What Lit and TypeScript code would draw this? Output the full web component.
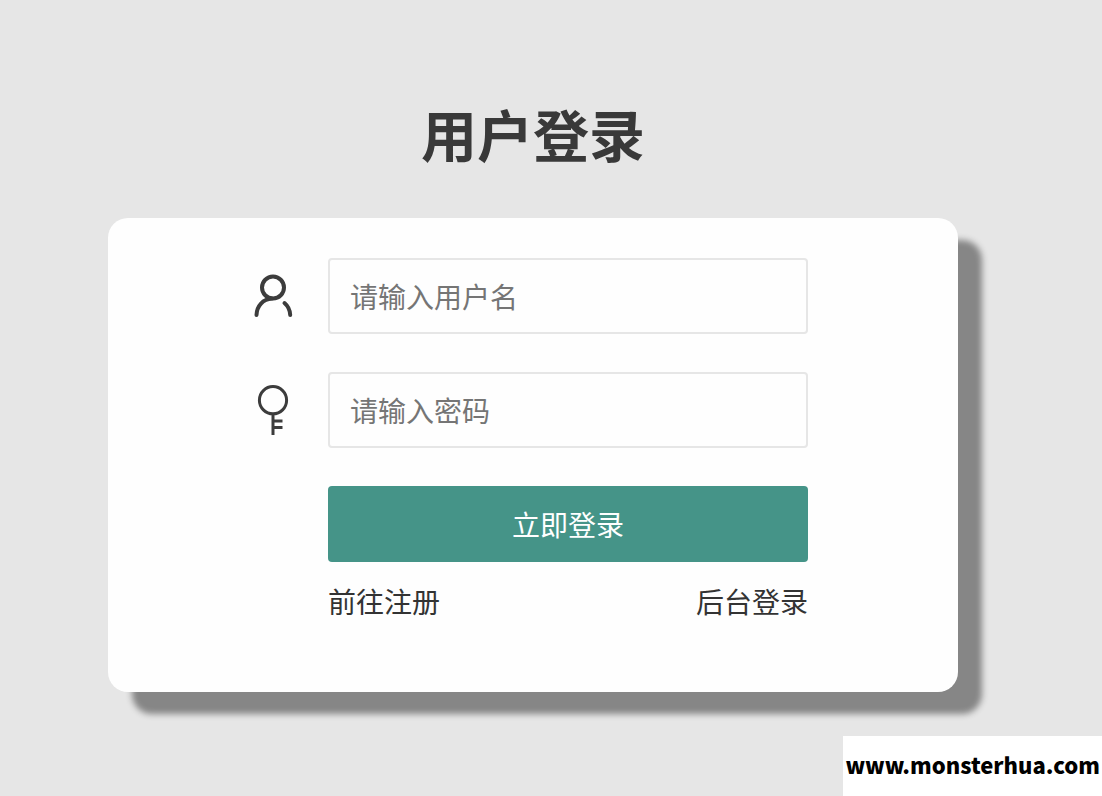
import { LitElement, html, css } from "lit";
import { customElement } from "lit/decorators.js";

@customElement("app-root")
export class AppRoot extends LitElement {
  static styles = css`
    :host {
      display: block;
      position: relative;
      box-sizing: border-box;
      min-height: 100vh;
      padding: 92px 144px 104px 108px;
      background: #e6e6e6;
      color: #333;
      font-family: "Noto Sans CJK SC", sans-serif;
      font-size: 28px;
      line-height: 40px;
    }
    .title {
      margin: 0 0 44px;
      color: #393939;
      font-size: 56px;
      line-height: 82px;
      font-weight: 700;
      text-align: center;
    }
    .card {
      box-sizing: border-box;
      max-width: 850px;
      margin: 0 auto;
      padding: 40px 150px 71px 110px;
      border-radius: 20px;
      background: #fefefe;
      box-shadow: 24px 22px 6px #868686;
    }
    .form {
      display: grid;
      grid-template-columns: 110px minmax(0, 1fr);
      row-gap: 38px;
    }
    .label {
      display: flex;
      align-items: center;
      justify-content: center;
    }
    .icon {
      width: 60px;
      height: 60px;
      fill: none;
      stroke: #3c3c3c;
    }
    .input,
    .submit {
      box-sizing: border-box;
      width: 100%;
      height: 76px;
      margin: 0;
      border-radius: 4px;
      font: inherit;
    }
    .input {
      padding: 0 20px;
      border: 2px solid #e6e6e6;
      background: #fefefe;
      color: #333;
      outline: none;
    }
    .input:focus {
      border-color: #d2d2d2;
    }
    .input::placeholder {
      color: #757575;
      opacity: 1;
    }
    .submit {
      grid-column: 2;
      padding: 0;
      border: 0;
      background: #459488;
      color: #fff;
      cursor: pointer;
    }
    .links {
      display: flex;
      justify-content: space-between;
      margin: 19px 0 0 110px;
    }
    .link {
      color: #333;
      text-decoration: none;
    }
    .site {
      position: absolute;
      right: 0;
      bottom: 0;
      padding: 0 2px 4px;
      background: #fff;
      color: #000;
      font-size: 22px;
      line-height: 56px;
      font-weight: 900;
    }
  `;

  render() {
    return html`
      <main>
        <h1 class="title">用户登录</h1>
        <div class="card">
          <form class="form" @submit=${(e: Event) => e.preventDefault()}>
            <label class="label" for="username" aria-label="用户名">
              <svg class="icon" viewBox="0 0 60 60" stroke-width="4" aria-hidden="true">
                <circle cx="30" cy="21.5" r="11" />
                <path
                  d="M29 32.5C20 33 13.8 40 13.5 49M41.5 37C45 40 47 44 47.2 49"
                  stroke-linecap="round"
                />
              </svg>
            </label>
            <input class="input" id="username" type="text" placeholder="请输入用户名" autocomplete="username" />
            <label class="label" for="password" aria-label="密码">
              <svg class="icon" viewBox="0 0 60 60" stroke-width="3" aria-hidden="true">
                <circle cx="30" cy="20.2" r="13.6" />
                <path d="M30 33.8V55M30 41h9.5M30 47.5h9.5" />
              </svg>
            </label>
            <input class="input" id="password" type="password" placeholder="请输入密码" autocomplete="current-password" />
            <button class="submit" type="submit">立即登录</button>
          </form>
          <nav class="links">
            <a class="link" href="#register">前往注册</a>
            <a class="link" href="#admin">后台登录</a>
          </nav>
        </div>
      </main>
      <footer class="site">www.monsterhua.com</footer>
    `;
  }
}
